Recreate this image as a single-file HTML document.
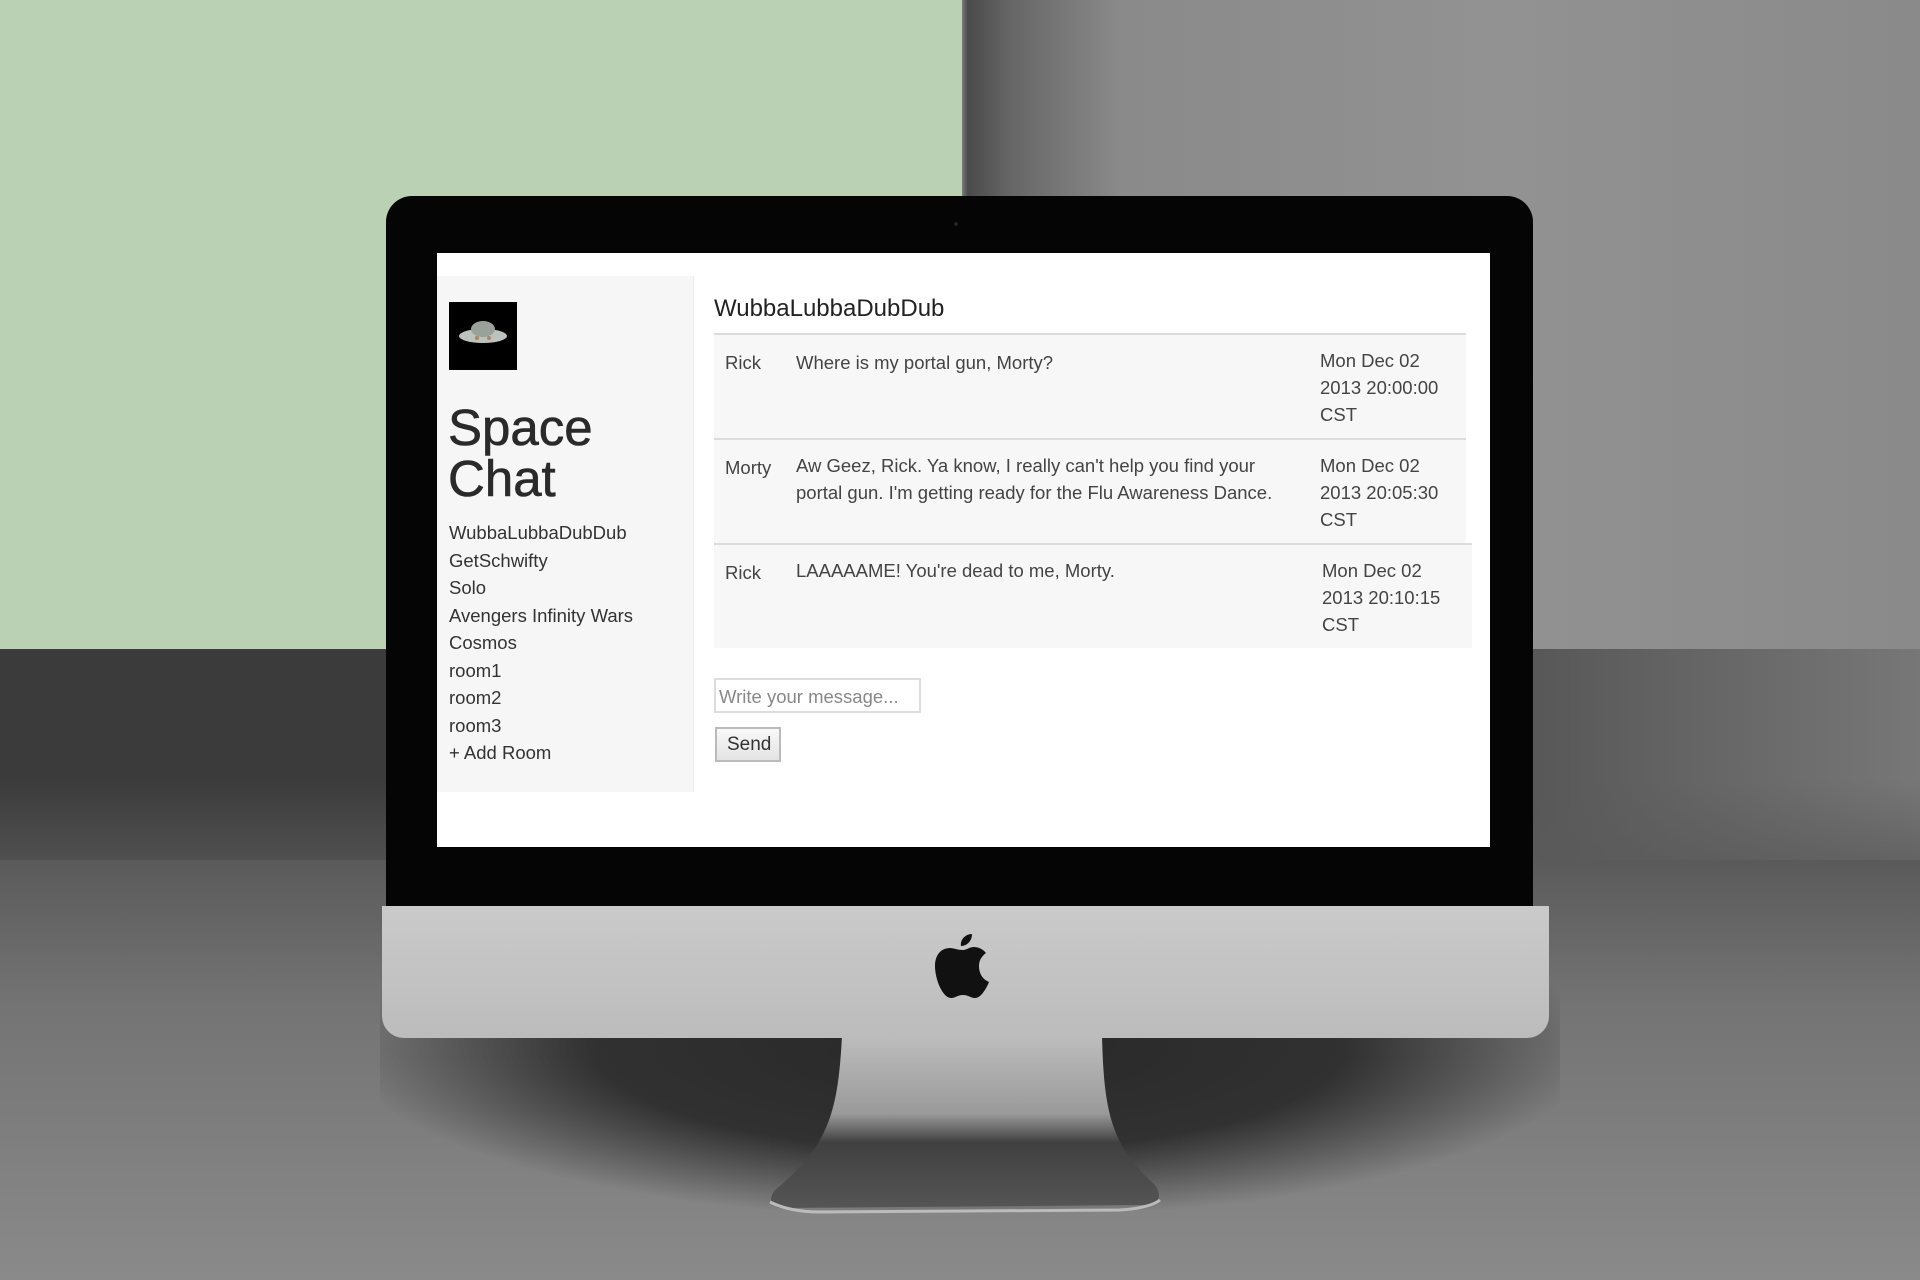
<!DOCTYPE html>
<html><head><meta charset="utf-8"><style>
*{margin:0;padding:0;box-sizing:border-box}
body{width:1920px;height:1280px;overflow:hidden;position:relative;background:#8a8a8a;font-family:"Liberation Sans",Arial,sans-serif}
.abs{position:absolute}
#bg{left:0;top:0;width:1920px;height:1280px;background:linear-gradient(90deg,#8c8c8c 0,#8c8c8c 960px,#4a4a4a 968px,#666 1010px,#8a8a8a 1120px,#929292 1500px,#8a8a8a 1920px)}
#green{left:0;top:0;width:962px;height:649px;background:#bad2b3}
#dark{left:0;top:649px;width:1920px;height:240px;background:linear-gradient(90deg,#3b3b3b 0,#3b3b3b 400px,#555 1500px,#777 1920px)}
#floor{left:0;top:860px;width:1920px;height:420px;background:linear-gradient(180deg,#5a5a5a 0,#747474 35%,#8a8a8a 100%)}
#floor2{left:0;top:780px;width:1920px;height:120px;background:linear-gradient(180deg,rgba(59,59,59,0),rgba(90,90,90,1))}
#shadow{left:380px;top:960px;width:1180px;height:250px;background:radial-gradient(ellipse at 50% 35%,rgba(40,40,40,1) 0,rgba(45,45,45,.95) 45%,rgba(70,70,70,0) 75%)}
#bezel{left:386px;top:196px;width:1147px;height:712px;background:#050505;border-radius:26px 26px 0 0}
#screen{left:437px;top:253px;width:1053px;height:594px;background:#fff}
#chin{left:382px;top:906px;width:1167px;height:132px;background:linear-gradient(180deg,#cacaca,#bcbcbc);border-radius:0 0 22px 22px}
#side{left:0;top:23px;width:257px;height:516px;background:#f6f6f6;border-right:1px solid #ececec}
.t{position:absolute;color:#333;white-space:nowrap}
.row{position:absolute;left:277px;width:752px;height:105px;background:#f7f7f7;border-top:2px solid #dcdcdc}
.row .t{font-size:18.5px;line-height:27px;color:#444}
</style></head><body>
<div id="bg" class="abs"></div>
<div id="green" class="abs"></div>
<div id="dark" class="abs"></div>
<div id="floor2" class="abs"></div>
<div id="floor" class="abs"></div>
<div id="shadow" class="abs"></div>
<svg class="abs" style="left:0;top:0" width="1920" height="1280">
<defs><linearGradient id="st" x1="0" y1="0" x2="0" y2="1"><stop offset="0" stop-color="#bdbdbd"/><stop offset=".45" stop-color="#9a9a9a"/><stop offset=".62" stop-color="#404040"/><stop offset="1" stop-color="#555"/></linearGradient></defs>
<path d="M842 1036 L1102 1036 C1104 1110 1110 1145 1155 1185 Q1165 1200 1150 1205 L780 1208 Q765 1203 775 1190 C830 1145 838 1110 842 1036 Z" fill="url(#st)"/>
<path d="M770 1202 Q790 1212 820 1212 L1120 1210 Q1150 1208 1160 1200" stroke="#bbb" stroke-width="3" fill="none"/>
</svg>
<div id="bezel" class="abs"></div>
<div class="abs" style="left:954px;top:222px;width:4px;height:4px;border-radius:50%;background:#222"></div>
<div id="chin" class="abs">
<svg class="abs" style="left:552px;top:26px" width="56" height="68" viewBox="0 0 56 68"><path d="M38 2 C38 9 33 14 27 14 C26 8 31 2 38 2 Z M29 18 C23 18 20 16 16 16 C7 16 1 23 1 34 C1 48 9 66 17 66 C22 66 23 63 29 63 C35 63 36 66 41 66 C47 66 52 57 55 50 C48 47 45 41 45 34 C45 28 48 24 52 21 C49 17 44 15 40 15 C35 15 33 18 29 18 Z" fill="#111"/></svg>
</div>
<div id="screen" class="abs">
<div id="side" class="abs">
<div class="abs" style="left:12px;top:26px;width:68px;height:68px;background:#000">
<svg width="68" height="68"><ellipse cx="34" cy="34" rx="24" ry="7" fill="#bcc2bc"/><ellipse cx="34" cy="27" rx="12" ry="8" fill="#9aa09a"/><circle cx="28" cy="36" r="2" fill="#a86"/><circle cx="40" cy="36" r="2" fill="#a86"/></svg></div>
<div class="t" style="left:11px;top:126px;font-size:51px;line-height:51px;color:#2a2a2a;-webkit-text-stroke:0.6px #2a2a2a">Space<br>Chat</div>
<div class="t" style="left:12px;top:243px;font-size:18.5px;line-height:27.5px">WubbaLubbaDubDub<br>GetSchwifty<br>Solo<br>Avengers Infinity Wars<br>Cosmos<br>room1<br>room2<br>room3<br>+ Add Room</div>
</div>
<div class="t" style="left:277px;top:42px;font-size:24px;color:#222">WubbaLubbaDubDub</div>
<div class="row" style="top:80px"><div class="t" style="left:11px;top:14px">Rick</div><div class="t" style="left:82px;top:14px">Where is my portal gun, Morty?</div><div class="t" style="left:606px;top:12px">Mon Dec 02<br>2013 20:00:00<br>CST</div></div>
<div class="row" style="top:185px"><div class="t" style="left:11px;top:14px">Morty</div><div class="t" style="left:82px;top:12px">Aw Geez, Rick. Ya know, I really can't help you find your<br>portal gun. I'm getting ready for the Flu Awareness Dance.</div><div class="t" style="left:606px;top:12px">Mon Dec 02<br>2013 20:05:30<br>CST</div></div>
<div class="row" style="top:290px;width:758px"><div class="t" style="left:11px;top:14px">Rick</div><div class="t" style="left:82px;top:12px">LAAAAAME! You're dead to me, Morty.</div><div class="t" style="left:608px;top:12px">Mon Dec 02<br>2013 20:10:15<br>CST</div></div>
<div class="abs" style="left:277px;top:425px;width:207px;height:35px;border:2px solid #ddd;background:#fff"><div class="t" style="left:3px;top:6px;font-size:18.5px;color:#888">Write your message...</div></div>
<div class="abs" style="left:278px;top:474px;width:66px;height:35px;border:2px solid #bbb;background:linear-gradient(#f8f8f8,#e4e4e4)"><div class="t" style="left:10px;top:5px;font-size:19px;color:#333">Send</div></div>
</div>
</body></html>
